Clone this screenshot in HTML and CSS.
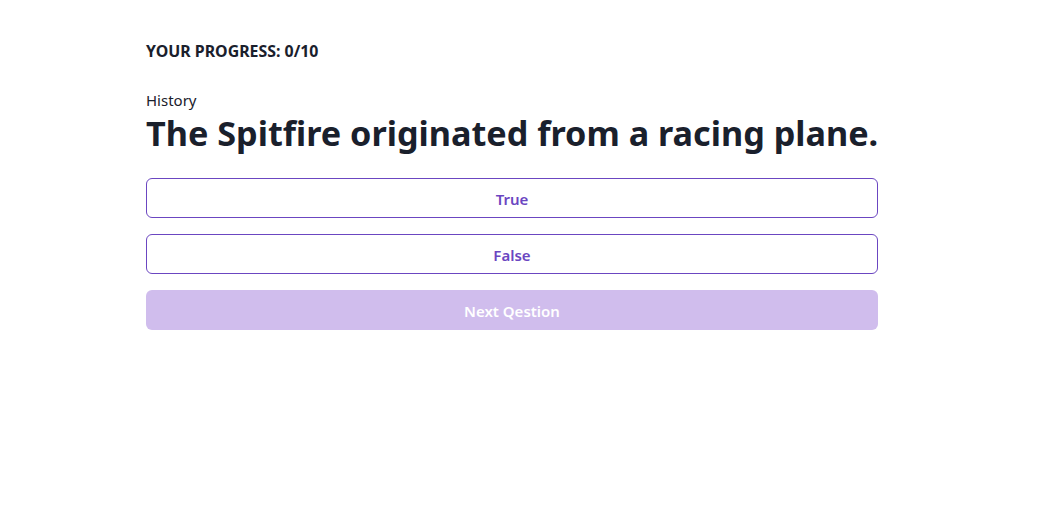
FILE: index.html
```html
<!DOCTYPE html>
<html>
<head>
<meta charset="utf-8">
<link rel="stylesheet" href="styles.css">
</head>
<body>
<main class="quiz">
  <p class="progress">YOUR PROGRESS: 0/10</p>
  <p class="category">History</p>
  <h1 class="question">The Spitfire originated from a racing plane.</h1>
  <div class="answers">
    <button class="answer">True</button>
    <button class="answer">False</button>
    <button class="next" disabled>Next Qestion</button>
  </div>
</main>
</body>
</html>
```
FILE: styles.css
```css
* { box-sizing: border-box; }
html, body { margin: 0; padding: 0; background: #fff; }
body {
  font-family: "Noto Sans", "Open Sans", sans-serif;
  color: #1A202C;
}
.quiz {
  width: 732px;
  margin-left: 146px;
  padding-top: 39px;
}
.progress {
  margin: 0;
  font-size: 15.9px;
  line-height: 24px;
  font-weight: 700;
}
.category {
  margin: 26px 0 0;
  font-size: 15px;
  line-height: 22px;
}
.question {
  margin: 0;
  font-size: 34.2px;
  line-height: 43px;
  font-weight: 700;
  white-space: nowrap;
}
.answers {
  display: flex;
  flex-direction: column;
  gap: 16px;
  margin-top: 24px;
}
.answer, .next {
  height: 40px;
  border-radius: 6px;
  font-family: inherit;
  font-size: 15px;
  font-weight: 600;
  width: 100%;
  padding-top: 2px;
}
.answer {
  background: #fff;
  border: 1px solid #6B46C1;
  color: #6B46C1;
}
.next {
  background: #D0BDED;
  border: none;
  color: #fff;
}
```
